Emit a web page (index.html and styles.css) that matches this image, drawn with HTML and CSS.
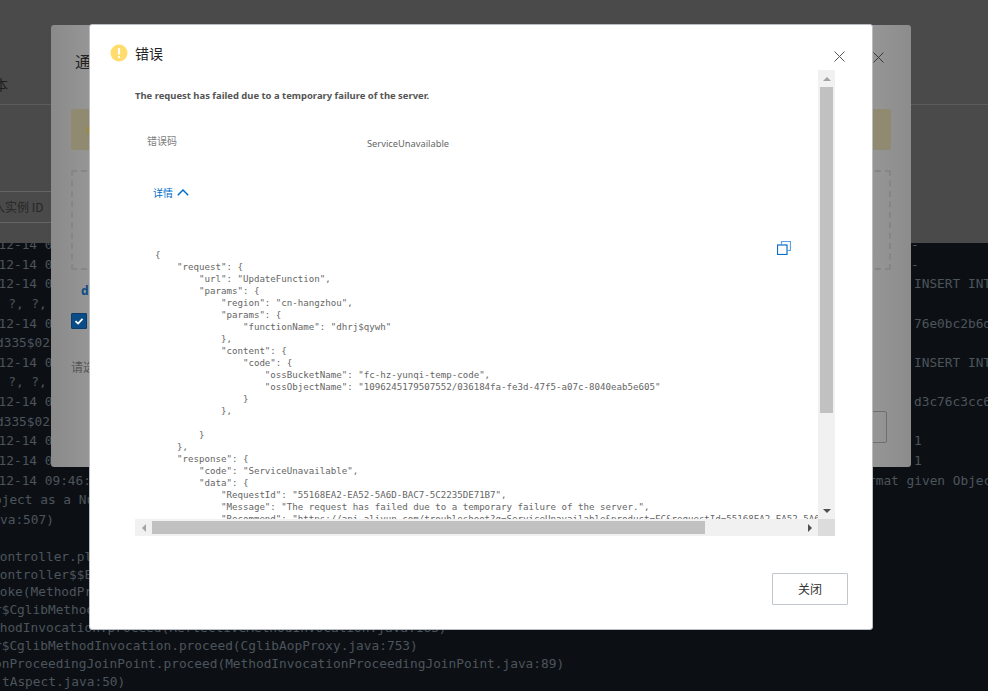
FILE: index.html
```html
<!DOCTYPE html>
<html lang="zh-CN">
<head>
<meta charset="utf-8">
<title>错误</title>
<link rel="stylesheet" href="styles.css">
</head>
<body>
<div class="page">
  <div class="console-head">
    <div class="tab">本</div>
    <div class="search">入实例 ID</div>
  </div>
  <div class="terminal">
    <div class="log log-a">
      <div class="row"><span>2022-12-14 09:46:20</span><span class="r r-dash">-</span></div>
      <div class="row"><span>2022-12-14 09:46:20</span><span class="r r-dash">-</span></div>
      <div class="row"><span>2022-12-14 09:46:20</span><span class="r">INSERT INTO table</span></div>
      <div class="row"><span class="shift">2022- ?, ?, ?, ?</span></div>
      <div class="row"><span>2022-12-14 09:46:20</span><span class="r">76e0bc2b6d</span></div>
      <div class="row"><span class="shift2">d335$022</span></div>
      <div class="row"><span>2022-12-14 09:46:20</span><span class="r">INSERT INTO table</span></div>
      <div class="row"><span class="shift">2022- ?, ?, ?, ?</span></div>
      <div class="row"><span>2022-12-14 09:46:20</span><span class="r">d3c76c3cc6</span></div>
      <div class="row"><span class="shift2">d335$022</span></div>
      <div class="row"><span>2022-12-14 09:46:20</span><span class="r">1</span></div>
      <div class="row"><span>2022-12-14 09:46:20</span><span class="r">1</span></div>
      <div class="row"><span>2022-12-14 09:46:20.123</span><span class="r r-wide">rmat given Object</span></div>
      <div class="row"><span class="shift3">oject as a Number</span></div>
      <div class="row"><span class="shift4">va:507)</span></div>
    </div>
    <div class="log log-b">
      <div class="row"><span class="s5">Controller.plus(Test.java)</span></div>
      <div class="row"><span class="s5">Controller$$EnhancerByCGLIB</span></div>
      <div class="row"><span class="s6">voke(MethodProxy.java:218)</span></div>
      <div class="row"><span class="s7">r$CglibMethodInvocation.invokeJoinpoint(CglibAopProxy.java:771)</span></div>
      <div class="row"><span class="s8">thodInvocation.proceed(ReflectiveMethodInvocation.java:163)</span></div>
      <div class="row"><span class="s7">r$CglibMethodInvocation.proceed(CglibAopProxy.java:753)</span></div>
      <div class="row"><span class="s9">onProceedingJoinPoint.proceed(MethodInvocationProceedingJoinPoint.java:89)</span></div>
      <div class="row"><span class="s10">tAspect.java:50)</span></div>
    </div>
  </div>
</div>

<section class="under-dialog">
  <div class="under-title">通</div>
  <div class="under-close">
    <svg viewBox="0 0 11 11" class="x-icon"><path d="M.5.5l10 10M10.500.5l-10 10"/></svg>
  </div>
  <div class="under-alert"><span class="under-alert-icon"></span></div>
  <div class="under-drop"></div>
  <div class="under-link">d</div>
  <div class="under-check">
    <svg viewBox="0 0 16 16"><path d="M4 8.200l3 2.800 5-5.500"/></svg>
  </div>
  <div class="under-note">请选择</div>
  <div class="under-foot"><span class="under-btn"></span></div>
</section>

<section class="dialog">
  <header class="dialog-head">
    <svg class="warn" viewBox="0 0 18 18"><circle cx="9" cy="9" r="8.500"/><rect x="7.900" y="4" width="2.200" height="6.800" rx="1"/><rect x="7.900" y="12" width="2.200" height="2.200" rx="1"/></svg>
    <h1>错误</h1>
    <svg class="x-icon x-main" viewBox="0 0 11 11"><path d="M.5.5l10 10M10.500.5l-10 10"/></svg>
  </header>

  <div class="scroller">
    <div class="viewport">
      <p class="message">The request has failed due to a temporary failure of the server.</p>
      <div class="kv">
        <span class="k">错误码</span>
        <span class="v">ServiceUnavailable</span>
      </div>
      <div class="more">详情
        <svg viewBox="0 0 12 7"><path d="M.8 6.200L6 1l5.200 5.200"/></svg>
      </div>
      <svg class="copy" viewBox="0 0 14 14"><path class="back" d="M4.500 3.500v-3h9v9h-3"/><rect x=".5" y="4" width="9.500" height="9.500"/></svg>
<pre class="code">{
    "request": {
        "url": "UpdateFunction",
        "params": {
            "region": "cn-hangzhou",
            "params": {
                "functionName": "dhrj$qywh"
            },
            "content": {
                "code": {
                    "ossBucketName": "fc-hz-yunqi-temp-code",
                    "ossObjectName": "1096245179507552/036184fa-fe3d-47f5-a07c-8040eab5e605"
                }
            },

        }
    },
    "response": {
        "code": "ServiceUnavailable",
        "data": {
            "RequestId": "55168EA2-EA52-5A6D-BAC7-5C2235DE71B7",
            "Message": "The request has failed due to a temporary failure of the server.",
            "Recommend": "https://api.aliyun.com/troubleshoot?q=ServiceUnavailable&amp;product=FC&amp;requestId=55168EA2-EA52-5A6D-BAC7-5C2235DE71B7"
        }
    }
}</pre>
    </div>
    <div class="vbar">
      <span class="btn"><i class="tri up"></i></span>
      <span class="vthumb"></span>
      <span class="vspace"></span>
      <span class="btn"><i class="tri down"></i></span>
    </div>
    <div class="hbar">
      <span class="btn"><i class="tri left"></i></span>
      <span class="hthumb"></span>
      <span class="hspace"></span>
      <span class="btn"><i class="tri right"></i></span>
    </div>
    <div class="corner"></div>
  </div>

  <footer class="dialog-foot">
    <button class="close-btn" type="button">关闭</button>
  </footer>
</section>
</body>
</html>
```

FILE: styles.css
```css
* { box-sizing: border-box; }
html, body { margin: 0; height: 100%; }
body {
  position: relative;
  width: 988px;
  height: 691px;
  overflow: hidden;
  background: #0c1014;
  font-family: "Noto Sans", "Noto Sans CJK SC", sans-serif;
}
.page { display: flex; flex-direction: column; height: 691px; }

.console-head {
  height: 243px;
  flex: none;
  overflow: hidden;
  background: #4a4a4a;
  padding-top: 75px;
  color: #1f1f1f;
}
.tab {
  height: 30px;
  margin-left: -6px;
  border-bottom: 1px solid #5c5c5c;
  font: 14px/18px "Noto Sans CJK SC", sans-serif;
}
.search {
  width: 60px;
  height: 32px;
  margin-top: 86px;
  margin-left: -7px;
  border-top: 1px solid #646464;
  border-bottom: 1px solid #646464;
  font: 12px/30px "Noto Sans CJK SC", sans-serif;
  color: #262626;
}

.terminal {
  flex: 1;
  overflow: hidden;
  font-family: "DejaVu Sans Mono", "Liberation Mono", monospace;
  font-size: 12.800px;
  color: #4c545c;
}
.log { margin-left: -40px; }
.log-a { margin-top: -8px; line-height: 19.640px; }
.log-b { margin-top: 18px; line-height: 17.900px; }
.row { display: flex; justify-content: space-between; width: 1028px; }
.row span { white-space: pre; }
.r { flex: none; width: 74px; overflow: hidden; }
.r-dash { width: 77px; }
.r-wide { width: 120px; }
.shift { margin-left: 2px; }
.shift2 { margin-left: 36px; }
.shift3 { margin-left: 34px; }
.shift4 { margin-left: 40px; }
.s5 { margin-left: 32px; }
.s6 { margin-left: 32px; }
.s7 { margin-left: 34px; }
.s8 { margin-left: 32px; }
.s9 { margin-left: 34px; }
.s10 { margin-left: 42px; }

/* Dialog beneath the error dialog */
.under-dialog {
  position: absolute;
  left: 51px;
  top: 25px;
  width: 860px;
  height: 442px;
  padding: 0 20px;
  border-radius: 3px;
  background: linear-gradient(90deg, #8a8a8a 0, #959595 36px, #959595 825px, #8c8c8c 100%);
  color: #222;
}
.under-title { height: 84px; padding-top: 24px; padding-left: 4px; font: 16px/24px "Noto Sans CJK SC", sans-serif; }
.under-close { position: absolute; right: 27px; top: 27px; }
.x-icon { display: block; width: 11px; height: 11px; fill: none; stroke: #3a3a3a; stroke-width: 1; }
.under-alert { height: 41px; background: #8f8a70; display: flex; align-items: center; padding-left: 16px; border-radius: 2px; overflow: hidden; }
.under-alert-icon { width: 14px; height: 14px; border-radius: 50%; background: #a08c20; }
.under-drop { height: 100px; margin-top: 20px; border: 2px dashed #858585; border-radius: 2px; }
.under-link { margin-top: 12px; padding-left: 10px; font: 700 12px/18px "Noto Sans", sans-serif; color: #0c4c86; }
.under-check { width: 16px; height: 16px; margin-top: 13px; background: #0c4c86; border: 1px solid #0b3d6b; border-radius: 1px; }
.under-check svg { display: block; width: 14px; height: 14px; fill: none; stroke: #fff; stroke-width: 2; }
.under-note { margin-top: 29px; font: 12px/18px "Noto Sans CJK SC", sans-serif; color: #555; }
.under-foot { display: flex; justify-content: flex-end; margin-top: 35px; }
.under-btn { width: 60px; height: 32px; margin-right: 4px; border: 1px solid #6f6f6f; border-radius: 2px; }

/* Error dialog */
.dialog {
  position: absolute;
  left: 89px;
  top: 24px;
  width: 784px;
  height: 606px;
  display: flex;
  flex-direction: column;
  background: #fff;
  border: 1px solid #b9bdc6;
  border-radius: 3px;
}
.dialog-head {
  flex: none;
  height: 45px;
  display: flex;
  align-items: center;
  padding: 10px 27px 0 20px;
}
.warn { width: 18px; height: 18px; flex: none; }
.warn circle { fill: #ffdc6b; }
.warn rect { fill: #fff; }
.dialog-head h1 {
  margin: 0 0 0 7px;
  font: 400 14px/20px "Noto Sans CJK SC", sans-serif;
  color: #222;
}
.x-main { margin-left: auto; margin-top: 8px; stroke: #555; }

.scroller {
  flex: none;
  width: 700px;
  height: 466px;
  margin-left: 45px;
  display: grid;
  grid-template-columns: 683px 17px;
  grid-template-rows: 449px 17px;
}
.viewport { position: relative; overflow: hidden; padding-top: 19px; }
.message {
  margin: 0;
  font: 700 9.450px/14px "Noto Sans", sans-serif;
  color: #555;
}
.kv { display: flex; margin-top: 31px; padding-left: 12px; height: 18px; }
.k { width: 220px; font: 10px/14px "Noto Sans CJK SC", sans-serif; color: #808080; }
.v { font: 9.300px/20px "Noto Sans", sans-serif; color: #666; }
.more {
  display: flex;
  align-items: center;
  gap: 4px;
  margin-top: 33px;
  padding-left: 18px;
  height: 16px;
  font: 10px/16px "Noto Sans CJK SC", sans-serif;
  color: #0070cc;
}
.more svg { width: 12px; height: 7px; fill: none; stroke: #0070cc; stroke-width: 1.500; margin-top: -2px; }
.copy { position: absolute; left: 642px; top: 171px; width: 14px; height: 14px; fill: #fff; stroke: #0d6fc9; stroke-width: 1.200; }
.copy .back { fill: none; stroke: #5ba1e4; }
.code {
  margin: 48px 0 0 20px;
  font: 9.130px/12px "DejaVu Sans Mono", "Liberation Mono", monospace;
  color: #666;
}

.vbar, .hbar { display: flex; background: #f1f1f1; }
.vbar { flex-direction: column; align-items: center; }
.btn { flex: none; width: 17px; height: 17px; display: flex; align-items: center; justify-content: center; }
.vthumb { width: 13px; height: 326px; background: #c1c1c1; flex: none; }
.vspace, .hspace { flex: 1; }
.hbar { align-items: center; }
.hthumb { height: 13px; width: 553px; background: #c1c1c1; flex: none; }
.corner { background: #dcdcdc; }
.tri { display: block; width: 0; height: 0; border-style: solid; border-color: transparent; }
.tri.up { border-width: 0 4px 4px; border-bottom-color: #a3a3a3; }
.tri.down { border-width: 4px 4px 0; border-top-color: #505050; }
.tri.left { border-width: 4px 4px 4px 0; border-right-color: #a3a3a3; }
.tri.right { border-width: 4px 0 4px 4px; border-left-color: #505050; }

.dialog-foot { flex: 1; display: flex; justify-content: flex-end; align-items: flex-start; padding: 37px 24px 0 0; }
.close-btn {
  width: 76px;
  height: 32px;
  padding: 0;
  background: #fff;
  border: 1px solid #c0c6cc;
  border-radius: 1px;
  font: 12px/30px "Noto Sans CJK SC", sans-serif;
  color: #333;
}
```
